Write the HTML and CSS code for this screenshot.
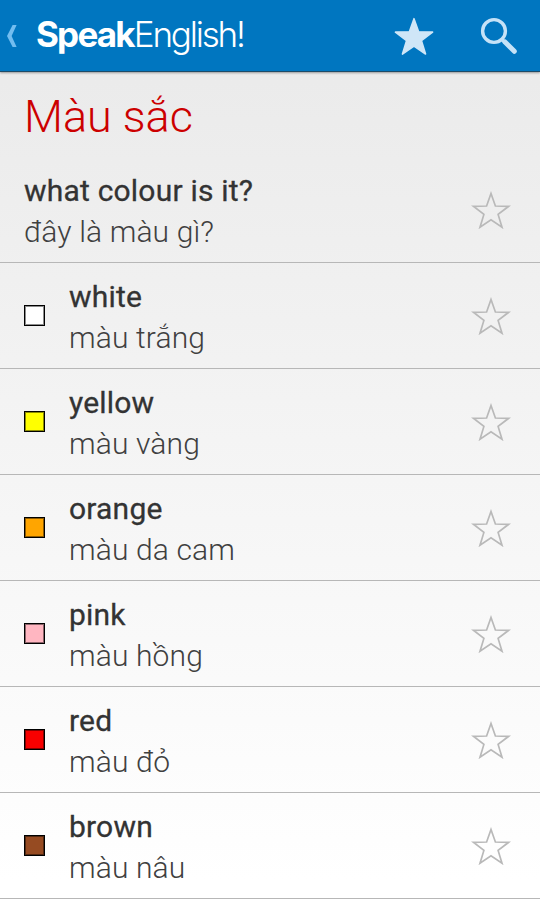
FILE: index.html
```
<!DOCTYPE html>
<html lang="vi">
<head>
  <meta charset="UTF-8">
  <meta name="viewport" content="width=device-width, initial-scale=1.0">
  <title>SpeakEnglish! | Màu sắc</title>
  <link rel="stylesheet" href="styles.css">
</head>
<body>
  <svg class="symbols" width="0" height="0">
    <symbol id="star" viewBox="0 0 40 38">
      <path d="M20 2.5 L24.4 15 L37.7 15.3 L27.1 23.4 L31 36.2 L20 28.7 L9 36.2 L12.9 23.4 L2.3 15.3 L15.6 15 Z"/>
    </symbol>
  </svg>

  <header class="topbar">
    <svg class="back" viewBox="0 0 10 22"><path d="M5.6 0 H9.6 L4.6 11 L9.6 22 H5.6 L0 11 Z"/></svg>
    <div class="logo"><span class="logo-bold">Speak</span><span class="logo-light">English!</span></div>
    <svg class="fav"><use href="#star"/></svg>
    <svg class="search" viewBox="0 0 38 38">
      <circle cx="14" cy="14" r="11.4"/>
      <path class="neck" d="M21.5 22 L25 25.5"/>
      <path class="handle" d="M25 25 L34.3 34.3"/>
    </svg>
  </header>

  <main>
    <h1>Màu sắc</h1>
    <ul class="phrases">
      <li>
        <div class="words"><p class="en">what colour is it?</p><p class="vi">đây là màu gì?</p></div>
        <svg class="star"><use href="#star"/></svg>
      </li>
      <li>
        <span class="swatch white"></span>
        <div class="words"><p class="en">white</p><p class="vi">màu trắng</p></div>
        <svg class="star"><use href="#star"/></svg>
      </li>
      <li>
        <span class="swatch yellow"></span>
        <div class="words"><p class="en">yellow</p><p class="vi">màu vàng</p></div>
        <svg class="star"><use href="#star"/></svg>
      </li>
      <li>
        <span class="swatch orange"></span>
        <div class="words"><p class="en">orange</p><p class="vi">màu da cam</p></div>
        <svg class="star"><use href="#star"/></svg>
      </li>
      <li>
        <span class="swatch pink"></span>
        <div class="words"><p class="en">pink</p><p class="vi">màu hồng</p></div>
        <svg class="star"><use href="#star"/></svg>
      </li>
      <li>
        <span class="swatch red"></span>
        <div class="words"><p class="en">red</p><p class="vi">màu đỏ</p></div>
        <svg class="star"><use href="#star"/></svg>
      </li>
      <li>
        <span class="swatch brown"></span>
        <div class="words"><p class="en">brown</p><p class="vi">màu nâu</p></div>
        <svg class="star"><use href="#star"/></svg>
      </li>
    </ul>
  </main>
</body>
</html>
```
FILE: styles.css
```
* {
    margin: 0;
    padding: 0;
    box-sizing: border-box;
}

body {
    height: 922px;
    background: linear-gradient(#e9e9e9, #ffffff 880px);
    color: #333333;
    font-family: Roboto, sans-serif;
    overflow: hidden;
}

.symbols {
    display: block;
}

.topbar {
    height: 72px;
    background: #0076c0;
    border-bottom: 1px solid #1d4b68;
    box-shadow: 0 1px 2px rgba(0, 0, 0, 0.35);
    display: flex;
    align-items: center;
    padding: 0 22px 0 7px;
}

.back {
    width: 10px;
    height: 22px;
    fill: #72bdf0;
}

.logo {
    margin-left: 19px;
    padding-bottom: 3px;
    width: 209px;
    display: flex;
    align-items: baseline;
    font-family: Inter, "Liberation Sans", sans-serif;
    font-size: 35px;
    line-height: 42px;
    color: #ffffff;
    white-space: nowrap;
}

.logo-bold {
    font-weight: 700;
    letter-spacing: -1.8px;
}

.logo-light {
    font-weight: 300;
    letter-spacing: -2.2px;
}

.fav {
    margin-left: auto;
    width: 42px;
    height: 40px;
    fill: #cfe6f7;
    stroke: #cfe6f7;
    stroke-width: 1.5;
    stroke-linejoin: round;
}

.search {
    width: 38px;
    height: 38px;
    margin-left: 45px;
    fill: none;
    stroke: #c5e2f7;
    stroke-width: 3.4;
}

.search .handle {
    stroke-width: 5;
    stroke-linecap: round;
}

h1 {
    height: 85px;
    padding: 18px 24px 0;
    font-size: 45px;
    font-weight: 300;
    line-height: 54px;
    color: #cc0000;
}

.phrases {
    list-style: none;
}

.phrases li {
    height: 106px;
    padding: 0 29px 0 24px;
    border-bottom: 1px solid #b7b7b7;
    display: flex;
    align-items: center;
}

.words {
    flex: 1;
    padding-top: 3px;
    font-size: 30px;
    line-height: 41px;
}

.en {
    font-weight: 400;
    letter-spacing: 0.2px;
    -webkit-text-stroke: 0.3px #333333;
}

.vi {
    font-weight: 300;
    letter-spacing: 0.13px;
    color: #404040;
}

.swatch {
    width: 21px;
    height: 21px;
    margin-right: 24px;
    border: 1px solid #000000;
    box-shadow: inset 0 0 0 1px rgba(0, 0, 0, 0.45);
}

.white { background: #ffffff; }
.yellow { background: #ffff00; }
.orange { background: #ffa500; }
.pink { background: #ffb6c1; }
.red { background: #f80000; }
.brown { background: #964b22; }

.star {
    width: 40px;
    height: 38px;
    fill: none;
    stroke: #b9b9b9;
    stroke-width: 1.7;
}
```
